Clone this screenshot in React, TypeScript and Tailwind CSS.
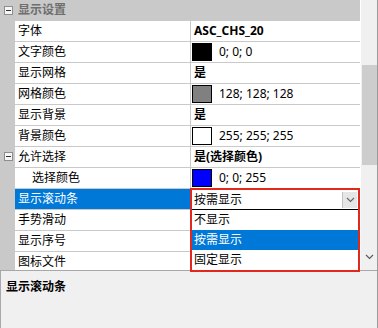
import React from 'react';

type Row = {
  name: string;
  bold?: string;
  swatch?: string;
  text?: string;
  toggle?: boolean;
  indent?: boolean;
  selected?: boolean;
};

const rows: Row[] = [
  { name: '字体', bold: 'ASC_CHS_20' },
  { name: '文字颜色', swatch: 'bg-[#000000]', text: '0; 0; 0' },
  { name: '显示网格', bold: '是' },
  { name: '网格颜色', swatch: 'bg-[#808080]', text: '128; 128; 128' },
  { name: '显示背景', bold: '是' },
  { name: '背景颜色', swatch: 'bg-[#ffffff]', text: '255; 255; 255' },
  { name: '允许选择', toggle: true, bold: '是(选择颜色)' },
  { name: '选择颜色', indent: true, swatch: 'bg-[#0000ff]', text: '0; 0; 255' },
  { name: '显示滚动条', selected: true },
  { name: '手势滑动' },
  { name: '显示序号' },
  { name: '图标文件' },
];

const font = 'font-["Noto_Sans","Noto_Sans_CJK_SC",sans-serif]';

function MinusBox() {
  return (
    <div className="w-[9px] h-[9px] border border-[#8e8e8e] bg-[#f6f6f6] flex items-center justify-center">
      <div className="w-[5px] h-px bg-[#333]" />
    </div>
  );
}

function Chevron({ className }: { className?: string }) {
  return (
    <svg width="9" height="6" viewBox="0 0 9 6" className={className}>
      <path d="M1 1 L4.5 4.5 L8 1" fill="none" stroke="currentColor" strokeWidth="1.2" />
    </svg>
  );
}

export default function App() {
  return (
    <div className={`relative w-[378px] h-[328px] overflow-hidden bg-white text-[12px] text-black border-r border-[#9a9a9a] ${font}`}>
      <div className="flex h-[270px]">
        {/* --- GRID --- */}
        <div className="w-[360px] h-[270px] overflow-hidden flex flex-col">
          <div className="h-[20px] shrink-0 bg-[#c9c9c9] flex items-center">
            <div className="w-[15px] flex justify-center pl-px">
              <MinusBox />
            </div>
            <span className="pl-[3px] font-bold text-[12px] text-[#6e6e6e] leading-none">显示设置</span>
          </div>
          {rows.map((r, i) => (
            <div key={i} className="h-[21px] shrink-0 flex">
              <div className="w-[15px] bg-[#c9c9c9] flex items-center justify-center pl-px">
                {r.toggle && <MinusBox />}
              </div>
              <div
                className={`w-[175px] border-t border-[#c9c9c9] flex items-center leading-none ${
                  r.selected ? 'bg-[#0078d7] text-white' : ''
                } ${r.indent ? 'pl-[17px]' : 'pl-[3px]'}`}
              >
                {r.name}
              </div>
              <div className="w-px bg-[#c9c9c9]" />
              <div className="flex-1 border-t border-[#c9c9c9] flex items-center leading-none">
                {r.bold && <span className="pl-[3px] font-bold">{r.bold}</span>}
                {r.swatch && (
                  <>
                    <div className={`ml-px w-[20px] h-[18px] border border-black ${r.swatch}`} />
                    <span className="pl-[7px]">{r.text}</span>
                  </>
                )}
              </div>
            </div>
          ))}
        </div>
        <div className="w-px bg-white" />
        {/* --- SCROLLBAR --- */}
        <div className="w-[16px] bg-[#f0f0f0] flex flex-col items-center">
          <div className="mt-[65px] w-[15px] h-[100px] bg-[#cdcdcd]" />
          <div className="mt-[89px] text-[#5a5a5a]">
            <Chevron />
          </div>
        </div>
      </div>

      {/* --- DESCRIPTION --- */}
      <div className="h-[58px] bg-[#f0f0f0] border-t border-l border-[#a8a8a8] pl-[5px] pt-[7px]">
        <span className="font-bold leading-none">显示滚动条</span>
      </div>

      {/* --- DROPDOWN (highlighted) --- */}
      <div className="absolute left-[190px] top-[188px] w-[170px] h-[84px] border-2 border-[#e2271d] flex flex-col bg-white">
        <div className="h-[19px] flex items-center">
          <span className="pl-[2px] flex-1 leading-none">按需显示</span>
          <div className="w-[15px] h-[16px] mr-px bg-[#e6e6e6] border-l border-[#c3c3c3] flex items-center justify-center text-[#666]">
            <Chevron />
          </div>
        </div>
        <div className="h-px bg-black" />
        <div className="h-[20px] flex items-center pl-[2px] leading-none">不显示</div>
        <div className="h-[20px] flex items-center pl-[2px] leading-none bg-[#0078d7] text-white">按需显示</div>
        <div className="h-[20px] flex items-center pl-[2px] leading-none">固定显示</div>
      </div>
    </div>
  );
}
